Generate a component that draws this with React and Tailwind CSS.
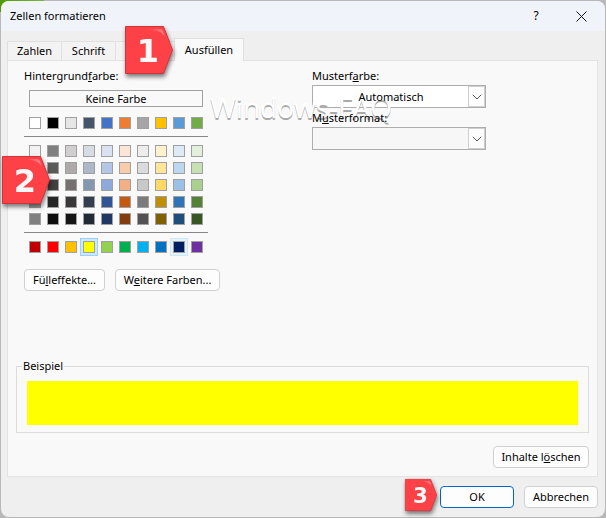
import React, { useState } from 'react';

const themeColors = ['#ffffff', '#000000', '#e7e6e6', '#44546a', '#4472c4', '#ed7d31', '#a5a5a5', '#ffc000', '#5b9bd5', '#70ad47'];

const shadeRows = [
    ['#f2f2f2', '#7f7f7f', '#d0cece', '#d6dce4', '#d9e1f2', '#fce4d6', '#ededed', '#fff2cc', '#ddebf7', '#e2efda'],
    ['#d9d9d9', '#595959', '#aeaaaa', '#acb9ca', '#b4c6e7', '#f8cbad', '#dbdbdb', '#ffe699', '#bdd7ee', '#c6e0b4'],
    ['#bfbfbf', '#404040', '#757171', '#8497b0', '#8ea9db', '#f4b084', '#c9c9c9', '#ffd966', '#9bc2e6', '#a9d08e'],
    ['#a6a6a6', '#262626', '#3a3838', '#333f4f', '#305496', '#c65911', '#7b7b7b', '#bf8f00', '#2f75b5', '#548235'],
    ['#808080', '#0d0d0d', '#161616', '#222b35', '#203764', '#833c0c', '#525252', '#806000', '#1f4e78', '#375623'],
];

const standardColors = ['#c00000', '#ff0000', '#ffc000', '#ffff00', '#92d050', '#00b050', '#00b0f0', '#0070c0', '#002060', '#7030a0'];

const tabs = ['Zahlen', 'Schrift', 'Rahmen', 'Ausfüllen'];

const buttonStyle = 'h-[22px] rounded-[4px] border border-[#d0d0d0] bg-[#fdfdfd] text-center whitespace-nowrap';

function SwatchRow({ colors, selected, focused, onSelect }) {
    return (
        <div className="ml-[5px] flex gap-[6px]">
            {colors.map((color) => (
                <button
                    key={color}
                    type="button"
                    aria-label={color}
                    onClick={() => onSelect(color)}
                    style={{ backgroundColor: color }}
                    className={`h-3 w-3 border border-[#a0a0a0] ${color === selected
                            ? 'outline-1 outline-offset-2 outline-[#99d1ff] ring-2 ring-[#cce8ff]'
                            : color === focused
                                ? 'outline-1 outline-offset-2 outline-[#cce8ff] ring-2 ring-[#e5f3ff]'
                                : ''
                        }`}
                />
            ))}
        </div>
    );
}

// Label and text are layered above the watermark, the box itself below it
function PatternSelect({ id, label, value, className }) {
    return (
        <div className="flex flex-col">
            <label htmlFor={id} className="relative z-20 h-[17px] leading-4">{label}</label>
            <div className={`relative h-[23px] border border-[#adadad] ${className}`}>
                <select
                    id={id}
                    className="relative z-20 block h-full w-full appearance-none bg-transparent pr-4 text-center text-black"
                >
                    <option>{value}</option>
                </select>
                <span className="pointer-events-none absolute inset-y-0 right-0 flex w-[17px] items-center justify-center border border-[#cfcfcf] bg-[#fdfdfd]">
                    <svg className="h-[6px] w-[10px]" viewBox="0 0 10 6" fill="none" stroke="#555">
                        <path d="M0.8 0.8 5 5 9.2 0.8" />
                    </svg>
                </span>
            </div>
        </div>
    );
}

// Red numbered arrow that points at the step's control
function StepMarker({ number, className }) {
    return (
        <svg className={`absolute z-30 overflow-visible drop-shadow-[1px_3px_2px_rgba(0,0,0,0.5)] ${className}`} viewBox="0 0 48 48">
            <defs>
                <linearGradient id={`shine-${number}`} x1="0" x2="1">
                    <stop offset="0" stopColor="#ff4146" />
                    <stop offset="1" stopColor="#ff8286" />
                </linearGradient>
            </defs>
            <path d="M0.5 0.5H38.5L47.5 24 38.5 47.5H0.5Z" fill="#fe4146" stroke="#cf3439" />
            <path d="M21 3H35Q37 3 38 5L40 11Q37 4 21 3Z" fill={`url(#shine-${number})`} />
            <text x="23" y="36" textAnchor="middle" fill="#f8f8f8" className="font-['DejaVu_Sans',sans-serif] text-[32px] font-bold">{number}</text>
        </svg>
    );
}

function App() {
    const [activeTab, setActiveTab] = useState('Ausfüllen');
    const [color, setColor] = useState('#ffff00');

    return (
        <div className="bg-[#b8b8b8] bg-[linear-gradient(90deg,#4f9a00,#7cb342)] bg-[length:44px_12px] bg-no-repeat p-px font-['Noto_Sans','Open_Sans',sans-serif] text-[11px] leading-4 text-black">
            <div className="relative flex min-h-[516px] flex-col rounded-lg bg-[#efefef]">
                {/* Title bar */}
                <header className="flex h-[30px] shrink-0 items-center rounded-t-lg bg-[#f0f3f9] pl-[9px] pr-[18px]">
                    <h1 className="grow">Zellen formatieren</h1>
                    <button type="button" aria-label="Hilfe" className="mr-[34px] w-3 text-[12px]">?</button>
                    <button type="button" aria-label="Schließen">
                        <svg className="h-[11px] w-[11px]" viewBox="0 0 11 11" stroke="#111">
                            <path d="M0.5 0.5 10.5 10.5M10.5 0.5 0.5 10.5" />
                        </svg>
                    </button>
                </header>

                {/* Tabs */}
                <div className="ml-[6px] flex h-[29px] items-end" role="tablist">
                    {tabs.map((tab) => (
                        <button
                            key={tab}
                            type="button"
                            role="tab"
                            aria-selected={tab === activeTab}
                            onClick={() => setActiveTab(tab)}
                            className={tab === activeTab
                                ? 'relative -mb-px h-[23px] w-[70px] border border-b-0 border-[#e0e0e0] bg-[#f9f9f9]'
                                : 'h-[19px] w-[54px] border border-r-0 border-b-0 border-[#e0e0e0] bg-[#f3f3f3] last:w-[70px] nth-3:w-[59px] nth-3:pl-1'
                            }
                        >
                            {tab}
                        </button>
                    ))}
                </div>

                <main className="mr-[7px] ml-[6px] flex grow flex-col border border-[#e3e3e3] bg-[#f9f9f9] px-2 pb-2">
                    <div className="flex">
                        <section className="ml-2 w-[184px] pt-[7px]">
                            <h2>Hintergrund<u>f</u>arbe:</h2>
                            <button type="button" className="mt-[6px] ml-[5px] block h-[17px] w-[174px] border border-[#a0a0a0] leading-[15px]">Keine Farbe</button>
                            <div className="mt-[10px]">
                                <SwatchRow colors={themeColors} onSelect={setColor} />
                            </div>
                            <hr className="mt-[7px] border-[#868686]" />
                            <div className="mt-2 flex flex-col gap-[5px]">
                                {shadeRows.map((row) => (
                                    <SwatchRow key={row[0]} colors={row} onSelect={setColor} />
                                ))}
                            </div>
                            <hr className="mt-[7px] border-[#868686]" />
                            <div className="mt-2">
                                <SwatchRow colors={standardColors} selected={color} focused="#002060" onSelect={setColor} />
                            </div>
                            <div className="mt-4 flex gap-[10px]">
                                <button type="button" className={`${buttonStyle} w-[81px] shrink-0`}>Fü<u>l</u>leffekte...</button>
                                <button type="button" className={`${buttonStyle} w-[105px] shrink-0`}>W<u>e</u>itere Farben...</button>
                            </div>
                        </section>

                        <section className="ml-[104px] flex w-[174px] flex-col gap-[2px] pt-[7px]">
                            <PatternSelect id="pattern-color" label={<>Musterf<u>a</u>rbe:</>} value="Automatisch" className="bg-white" />
                            <PatternSelect id="pattern-format" label={<>M<u>u</u>sterformat:</>} value="" className="bg-[#f7f7f7]" />
                        </section>
                    </div>

                    <fieldset className="mt-auto border border-[#dcdcdc] px-[10px] pb-[7px]">
                        <legend className="-ml-[5px] px-px">Beispiel</legend>
                        <div className="mt-[7px] h-11" style={{ backgroundColor: color }} />
                    </fieldset>
                    <button type="button" className={`${buttonStyle} mt-[13px] w-24 self-end`}>Inhalte l<u>ö</u>schen</button>
                </main>

                <footer className="flex justify-end gap-[10px] py-[9px] pr-[7px]">
                    <button type="button" className="h-[22px] w-[74px] rounded-[4px] border border-[#0067c0] bg-[#fdfdfd]">OK</button>
                    <button type="button" className={`${buttonStyle} w-[74px]`}>Abbrechen</button>
                </footer>

                {/* Watermark */}
                <span className="pointer-events-none absolute top-[86px] left-[209px] z-10 font-['Open_Sans','Noto_Sans',sans-serif] text-[28px] leading-10 text-white [text-shadow:0_2px_0_#aaa]">Windows-FAQ</span>

                <StepMarker number={1} className="top-[25px] left-[124px] h-12 w-12" />
                <StepMarker number={2} className="top-[155px] left-px h-12 w-12" />
                <StepMarker number={3} className="top-[478px] left-[404px] h-8 w-8" />
            </div>
        </div>
    );
}

export default App;
